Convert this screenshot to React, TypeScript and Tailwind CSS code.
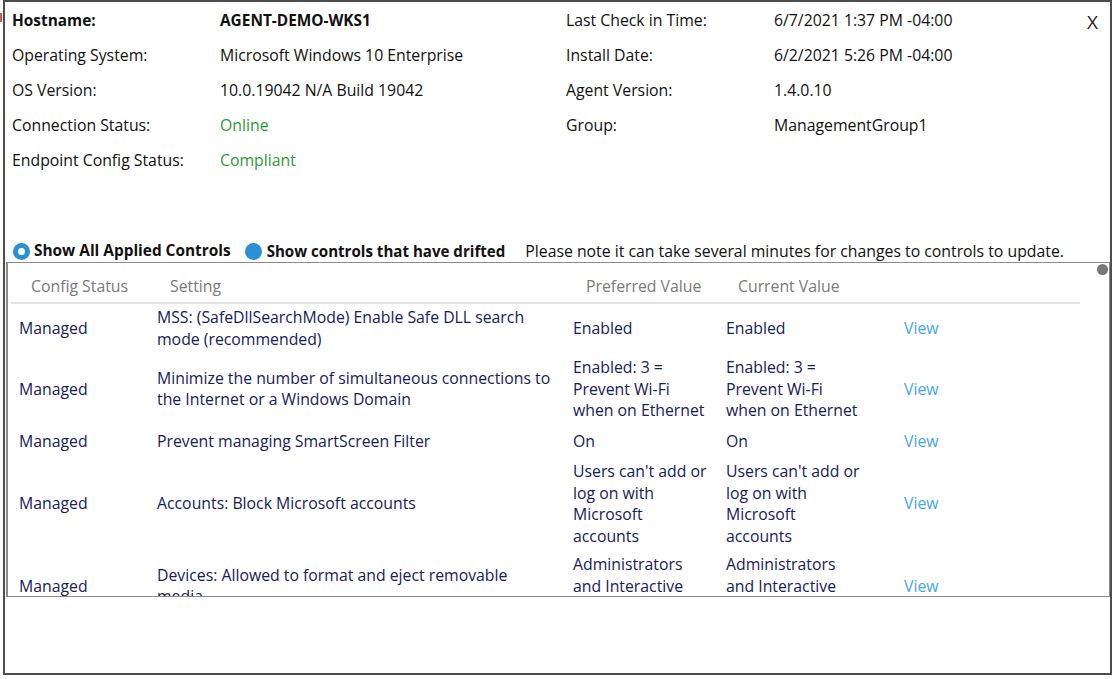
import React from "react";

type Row = { status: string; setting: string; pref: string; cur: string };

const rows: Row[] = [
  {
    status: "Managed",
    setting: "MSS: (SafeDllSearchMode) Enable Safe DLL search mode (recommended)",
    pref: "Enabled",
    cur: "Enabled",
  },
  {
    status: "Managed",
    setting: "Minimize the number of simultaneous connections to the Internet or a Windows Domain",
    pref: "Enabled: 3 = Prevent Wi-Fi when on Ethernet",
    cur: "Enabled: 3 = Prevent Wi-Fi when on Ethernet",
  },
  {
    status: "Managed",
    setting: "Prevent managing SmartScreen Filter",
    pref: "On",
    cur: "On",
  },
  {
    status: "Managed",
    setting: "Accounts: Block Microsoft accounts",
    pref: "Users can't add or log on with Microsoft accounts",
    cur: "Users can't add or log on with Microsoft accounts",
  },
  {
    status: "Managed",
    setting: "Devices: Allowed to format and eject removable media",
    pref: "Administrators and Interactive Users",
    cur: "Administrators and Interactive Users",
  },
  {
    status: "Managed",
    setting: "Interactive logon: Do not require CTRL+ALT+DEL",
    pref: "Disabled",
    cur: "Disabled",
  },
];

const info: [string, React.ReactNode, string, string][] = [
  ["Hostname:", "AGENT-DEMO-WKS1", "Last Check in Time:", "6/7/2021 1:37 PM -04:00"],
  ["Operating System:", "Microsoft Windows 10 Enterprise", "Install Date:", "6/2/2021 5:26 PM -04:00"],
  ["OS Version:", "10.0.19042 N/A Build 19042", "Agent Version:", "1.4.0.10"],
  ["Connection Status:", "Online", "Group:", "ManagementGroup1"],
  ["Endpoint Config Status:", "Compliant", "", ""],
];

export default function App() {
  return (
    <div className="relative h-[679px] w-[1117px] overflow-hidden bg-white font-['Open_Sans',sans-serif] text-[15.8px] text-[#111]">
      <div className="absolute left-0 top-[13px] h-[9px] w-[2px] bg-[#d9534f]" />
      <div className="relative ml-[3px] flex h-[675px] w-[1109px] flex-col border-2 border-[#4d4d4d]">
        <div className="absolute right-[12px] top-[8px] text-[19px] leading-[24px] text-[#222]">X</div>

        <div className="grid grid-cols-[208px_346px_208px_1fr] pl-[7px] pt-[1px]">
          {info.map((r, i) => (
            <React.Fragment key={i}>
              <div className={`h-[35px] leading-[35px] ${i === 0 ? "font-bold text-[15.4px]" : ""}`}>{r[0]}</div>
              <div
                className={`h-[35px] leading-[35px] ${i === 0 ? "font-bold text-[15.4px]" : ""} ${
                  i >= 3 ? "text-[#2f9a34]" : ""
                }`}
              >
                {r[1]}
              </div>
              <div className="h-[35px] leading-[35px]">{r[2]}</div>
              <div className="h-[35px] leading-[35px]">{r[3]}</div>
            </React.Fragment>
          ))}
        </div>

        <div className="mt-[62px] flex h-[22px] items-center pl-[8px] leading-[22px]">
          <span className="flex h-[17px] w-[17px] items-center justify-center rounded-full bg-[#2d8fd5]">
            <span className="h-[7px] w-[7px] rounded-full bg-white" />
          </span>
          <span className="ml-[4px] text-[15.4px] font-bold">Show All Applied Controls</span>
          <span className="ml-[14px] h-[17px] w-[17px] rounded-full bg-[#2d8fd5]" />
          <span className="ml-[5px] text-[15.1px] font-bold">Show controls that have drifted</span>
          <span className="ml-[20px]">Please note it can take several minutes for changes to controls to update.</span>
        </div>

        <div className="relative ml-[1px] h-[335px] w-[1104px] overflow-hidden border border-l-2 border-[#8c8c8c] pl-[3px]">
          <div className="absolute right-[1px] top-[1px] h-[11px] w-[11px] rounded-full bg-[#777]" />
          <table className="w-[1069px] table-fixed border-collapse">
            <colgroup>
              <col className="w-[138px]" />
              <col className="w-[416px]" />
              <col className="w-[153px]" />
              <col className="w-[178px]" />
              <col className="w-[184px]" />
            </colgroup>
            <thead>
              <tr className="border-b-2 border-[#e3e3e3] text-left text-[#7a7a7a]">
                <th className="pb-[4px] pl-[20px] pt-[13px] font-normal leading-[21.5px]">Config Status</th>
                <th className="pb-[4px] pl-[21px] pt-[13px] font-normal leading-[21.5px]">Setting</th>
                <th className="pb-[4px] pl-[21px] pt-[13px] font-normal leading-[21.5px]">Preferred Value</th>
                <th className="pb-[4px] pl-[20px] pt-[13px] font-normal leading-[21.5px]">Current Value</th>
                <th />
              </tr>
            </thead>
            <tbody className="text-[#14215e]">
              {rows.map((r, i) => (
                <tr key={i} className="align-middle leading-[21.5px]">
                  <td className="h-[32.5px] py-[3.5px] pl-[8px]">{r.status}</td>
                  <td className="py-[3.5px] pl-[8px]">
                    <div className="w-[396px]">{r.setting}</div>
                  </td>
                  <td className="py-[3.5px] pl-[8px]">
                    <div className="w-[137px]">{r.pref}</div>
                  </td>
                  <td className="py-[3.5px] pl-[8px]">
                    <div className="w-[137px]">{r.cur}</div>
                  </td>
                  <td className="py-[3.5px] pl-[8px] text-[#45a6f2]">View</td>
                </tr>
              ))}
            </tbody>
          </table>
        </div>
      </div>
    </div>
  );
}
